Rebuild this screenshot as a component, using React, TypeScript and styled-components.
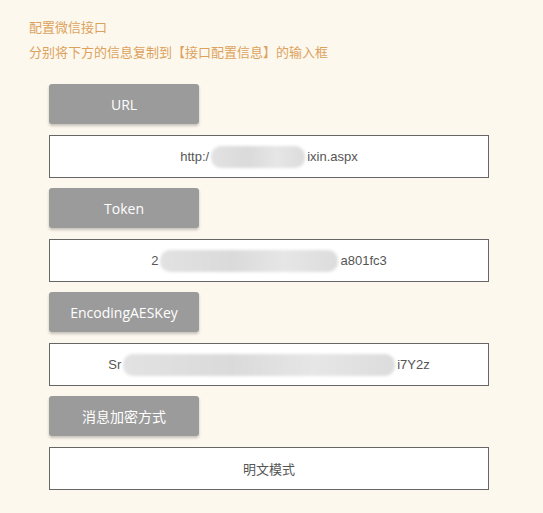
import styled, { createGlobalStyle } from 'styled-components';

const GlobalStyle = createGlobalStyle`
  html, body {
    margin: 0;
    padding: 0;
    background: #fdf8ee;
  }
  body {
    font-family: "Open Sans", "Noto Sans CJK SC", sans-serif;
  }
`;

type Field = {
  label: string;
  head?: string;
  tail?: string;
  masked?: number;
  value?: string;
};

const fields: Field[] = [
  { label: 'URL', head: 'http:/', masked: 94, tail: 'ixin.aspx' },
  { label: 'Token', head: '2', masked: 178, tail: 'a801fc3' },
  { label: 'EncodingAESKey', head: 'Sr', masked: 272, tail: 'i7Y2z' },
  { label: '消息加密方式', value: '明文模式' },
];

const App = () => {
  return (
    <Page>
      <GlobalStyle />
      <Title>配置微信接口</Title>
      <Title>分别将下方的信息复制到【接口配置信息】的输入框</Title>
      <List>
        {fields.map(f => (
          <Group key={f.label}>
            <Label>{f.label}</Label>
            <ValueBox>
              {f.value ? (
                <Cn>{f.value}</Cn>
              ) : (
                <>
                  {f.head}
                  <Mask style={{ width: f.masked }} />
                  {f.tail}
                </>
              )}
            </ValueBox>
          </Group>
        ))}
      </List>
    </Page>
  );
};

const Page = styled.div`
  padding: 18px 0 0 29px;
  min-height: 513px;
  box-sizing: border-box;
`;

const Title = styled.div`
  font-family: "Noto Sans CJK SC", sans-serif;
  font-size: 13px;
  line-height: 17px;
  color: #dca25c;
  margin-bottom: 8px;
`;

const List = styled.div`
  display: flex;
  flex-direction: column;
  gap: 10px;
  padding: 16px 0 0 20px;
`;

const Group = styled.div`
  display: flex;
  flex-direction: column;
  gap: 11px;
`;

const Label = styled.div`
  width: 150px;
  height: 40px;
  display: flex;
  align-items: center;
  justify-content: center;
  background: #9b9b9b;
  color: #fff;
  font-family: "Open Sans", "Noto Sans CJK SC", sans-serif;
  font-size: 14px;
  border-radius: 3px;
  box-shadow: 0 2px 3px rgba(0, 0, 0, 0.22);
`;

const ValueBox = styled.div`
  width: 440px;
  height: 43px;
  box-sizing: border-box;
  border: 1px solid #666;
  background: #fff;
  display: flex;
  align-items: center;
  justify-content: center;
  font-family: "Liberation Sans", Arial, sans-serif;
  font-size: 13px;
  color: #555;
`;

const Cn = styled.span`
  font-family: "Noto Sans CJK SC", sans-serif;
`;

const Mask = styled.span`
  display: inline-block;
  height: 22px;
  background: linear-gradient(90deg, #e2e2e2, #dadada 40%, #e6e6e6 70%, #dcdcdc);
  border-radius: 10px;
  filter: blur(1.5px);
  margin: 0 2px;
`;

export default App;
